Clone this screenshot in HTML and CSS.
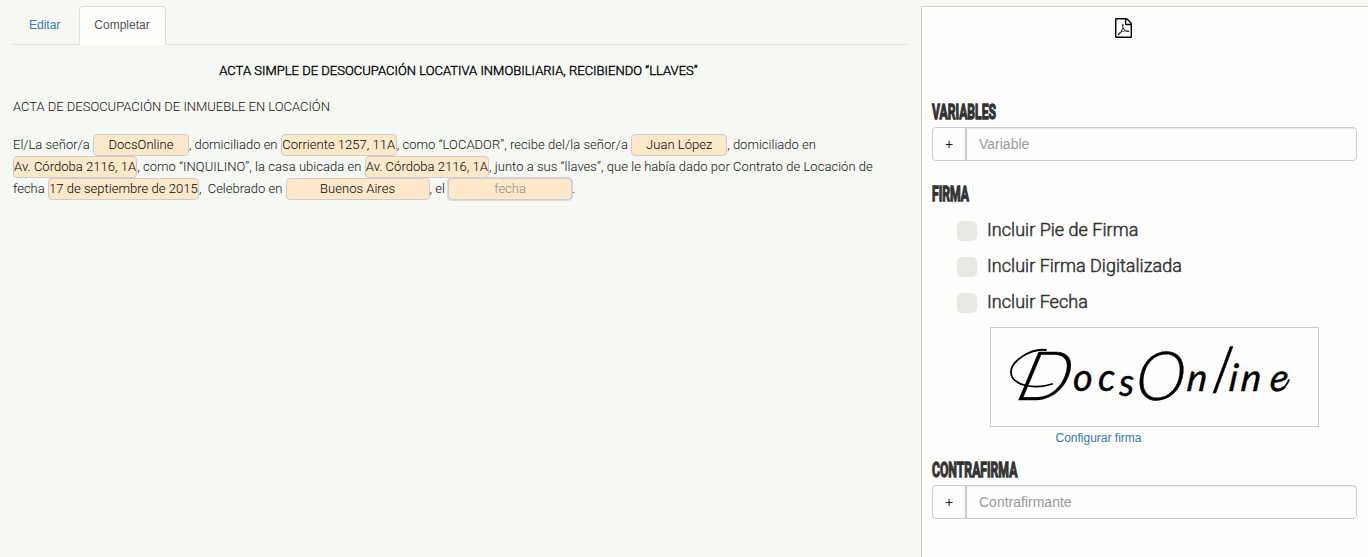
FILE: index.html
```html
<!DOCTYPE html>
<html lang="es">
<head>
<meta charset="utf-8">
<title>DocsOnline</title>
<link rel="stylesheet" href="styles.css">
</head>
<body>
<div class="page">
  <main class="editor">
    <nav class="tabs">
      <a class="tab">Editar</a>
      <a class="tab active">Completar</a>
    </nav>
    <article class="doc">
      <h1 class="doc-title">ACTA SIMPLE DE DESOCUPACIÓN LOCATIVA INMOBILIARIA, RECIBIENDO “LLAVES”</h1>
      <p class="doc-sub">ACTA DE DESOCUPACIÓN DE INMUEBLE EN LOCACIÓN</p>
      <p class="doc-body">El/La señor/a <span class="field w96">DocsOnline</span>, domiciliado en <span class="field w116">Corriente 1257, 11A</span><span class="loose">, como “LOCADOR”, recibe del/la señor/a </span><span class="field w96">Juan López</span>, domiciliado en<br><span class="field w124">Av. Córdoba 2116, 1A</span><span class="loose">, como “INQUILINO”, la casa ubicada en </span><span class="field w124">Av. Córdoba 2116, 1A</span><span class="loose">, junto a sus “llaves”, que le había dado por Contrato de Locación de</span><br>fecha <span class="field w151">17 de septiembre de 2015</span>,&nbsp; Celebrado en <span class="field w144">Buenos Aires</span>, el <span class="field w124 empty">fecha</span>.</p>
    </article>
  </main>
  <aside class="panel">
    <div class="export">
      <svg class="pdf" viewBox="0 0 1536 1792"><path d="M1468 380q28 28 48 76t20 88v1152q0 40-28 68t-68 28H96q-40 0-68-28t-28-68V96q0-40 28-68T96 0h896q40 0 88 20t76 48zm-444-244v376h376q-10-29-22-41l-313-313q-12-12-41-22zm384 1528V640H992q-40 0-68-28t-28-68V128H128v1536h1280zM894 1071q33 26 84 56 59-7 117-7 147 0 177 49 16 22 2 52 0 1-1 2l-2 2v1q-6 38-71 38-48 0-115-20t-130-53q-221 24-392 83-153 262-242 262-15 0-28-7l-24-12q-1-1-6-5-10-10-6-36 9-40 56-91.500t132-96.500q14-9 23 6 2 2 2 4 52-85 107-197 68-136 104-262-24-82-30.500-159.500t6.500-127.500q11-40 42-40h22q23 0 35 15 18 21 9 68-2 6-4 8 1 3 1 8v30q-2 123-14 192 55 164 146 238zm-576 411q52-24 137-158-51 40-87.500 84t-49.500 74zm398-920q-15 42-2 132 1-7 7-44 0-3 7-43 1-4 4-8-1-1-1-2t-1-2q-1-22-13-36 0 1-1 2v1zm-124 661q135-54 284-81-2-1-13-9.500t-16-13.500q-76-67-127-176-27 86-83 197-30 56-45 83zm646-16q-24-24-140-24 76 28 124 28 14 0 18-1 0-1-2-3z"/></svg>
    </div>
    <h2 class="heading"><span class="cond">VARIABLES</span></h2>
    <div class="group"><span class="add">+</span><span class="input">Variable</span></div>
    <h2 class="heading firma"><span class="cond">FIRMA</span></h2>
    <div class="checks">
      <label class="check"><span class="box"></span><span class="label">Incluir Pie de Firma</span></label>
      <label class="check"><span class="box"></span><span class="label">Incluir Firma Digitalizada</span></label>
      <label class="check"><span class="box"></span><span class="label">Incluir Fecha</span></label>
    </div>
    <div class="signature">
      <svg width="327" height="98" viewBox="991 328 327 98">
        <path class="swash" d="M1046 350C1030 348 1010 362 1011 373C1012 385 1034 390 1052 384"/>
        <g class="sig"><text class="cap" transform="translate(1014 400) skewX(-16) scale(1.07 1)">D</text><text class="low" x="1073 1098 1119" y="391 391 396">ocs</text><text class="cap" transform="translate(1134 400) skewX(-5)">O</text><text class="low" transform="translate(1186 391) skewX(-6)">n</text><text class="tall" transform="translate(1210 393) skewX(-14)">l</text><text class="low" transform="translate(1228 391) skewX(-6)" x="0 12 41">ine</text></g>
        <path class="swash" d="M1280 390Q1286 387 1289 380"/>
      </svg>
    </div>
    <a class="config">Configurar firma</a>
    <h2 class="heading contra"><span class="cond">CONTRAFIRMA</span></h2>
    <div class="group"><span class="add">+</span><span class="input">Contrafirmante</span></div>
  </aside>
</div>
</body>
</html>
```
FILE: styles.css
```css
* { box-sizing: border-box; }
body {
  margin: 0;
  background: #f6f8f4;
  color: #333;
  font: 12px/17px "Liberation Sans", Arial, sans-serif;
}
.page { display: flex; height: 557px; padding-top: 6px; overflow: hidden; }
.editor { width: 921px; padding: 0 14px 0 13px; }
.tabs { display: flex; gap: 2.5px; height: 39px; border-bottom: 1px solid #ddd; }
.tab {
  height: 39px;
  padding: 10px 15px;
  border: 1px solid transparent;
  border-radius: 4px 4px 0 0;
  color: #337ab7;
}
.tab.active { padding: 10px 15px 10px 14.5px; background: #fefefd; border-color: #ddd; border-bottom-color: #fefefd; color: #555; }

.doc { font-family: Roboto, sans-serif; font-weight: 300; font-size: 13px; line-height: 22px; color: #111; }
.doc-title {
  margin: 14.5px 3px 0 0;
  text-align: center;
  font-size: 13px;
  font-weight: 300;
  letter-spacing: 0.015px;
  color: #000;
  -webkit-text-stroke: 0.4px #000;
}
.doc-sub { margin: 14.5px 0 0; letter-spacing: -0.015px; }
.doc-body { margin: 16px 0 0; white-space: nowrap; }
.loose { letter-spacing: 0.045px; }
.field {
  display: inline-block;
  height: 22px;
  line-height: 20px;
  vertical-align: top;
  text-align: center;
  background: #fde8ca;
  border: 1px solid #ccc;
  border-radius: 4px;
  color: #000;
  letter-spacing: 0.03px;
}
.w96 { width: 96px; }
.w116 { width: 116px; }
.w124 { width: 124.2px; }
.w144 { width: 144px; }
.w151 { width: 151px; }
.field.empty { color: #8f8a82; box-shadow: 0 0 1px 1px #d5d7d3; }

.panel {
  flex: 1;
  padding: 11px 10px 0;
  background: #fefefd;
  border-top: 1px solid #ccc;
  border-left: 1px solid #ccc;
}
.export { height: 82px; padding-left: 183px; }
.pdf { display: block; width: 17px; height: 20px; }
.heading { height: 27px; margin: 0; font: 700 21px/24px Roboto, sans-serif; }
.cond { display: inline-block; transform: scaleX(0.58); transform-origin: left; -webkit-text-stroke: 1.3px #333; }
.group { display: flex; width: 425px; height: 34px; border: 1px solid #ccc; border-radius: 4px; }
.add { width: 34px; border-right: 2px solid #ccc; text-align: center; font-size: 14px; line-height: 32px; color: #222; }
.input { flex: 1; padding-left: 12px; font-size: 14px; line-height: 32px; color: #999; box-shadow: inset 0 1px 1px rgba(0,0,0,.075); }
.firma { margin-top: 21px; }
.checks { padding: 9px 0 0 25px; }
.check { display: flex; gap: 10px; height: 36px; font: 300 18px/20px Roboto, sans-serif; -webkit-text-stroke: 0.5px #333; }
.label { padding-top: 1.5px; letter-spacing: 0.03px; }
.box { width: 20px; height: 20px; margin-top: 3px; border-radius: 5px; background: #e6e9e4; }
.signature { width: 329px; height: 100px; margin: 1px 0 0 58px; border: 1px solid #ccc; }
.signature svg { display: block; }
.sig { font-family: Lato, sans-serif; font-style: italic; font-weight: 400; fill: #000; }
.swash { fill: none; stroke: #000; stroke-width: 1.8; stroke-linecap: round; }
.cap { font-size: 68px; font-weight: 300; stroke: #000; stroke-width: .3; }
.low { font-size: 38px; stroke: #000; stroke-width: .4; }
.tall { font-size: 64px; font-weight: 300; stroke: #000; stroke-width: .4; }
.config { display: block; height: 17px; margin: 3px 0 0 123.5px; line-height: 17px; color: #337ab7; }
.contra { margin-top: 11px; }
```
